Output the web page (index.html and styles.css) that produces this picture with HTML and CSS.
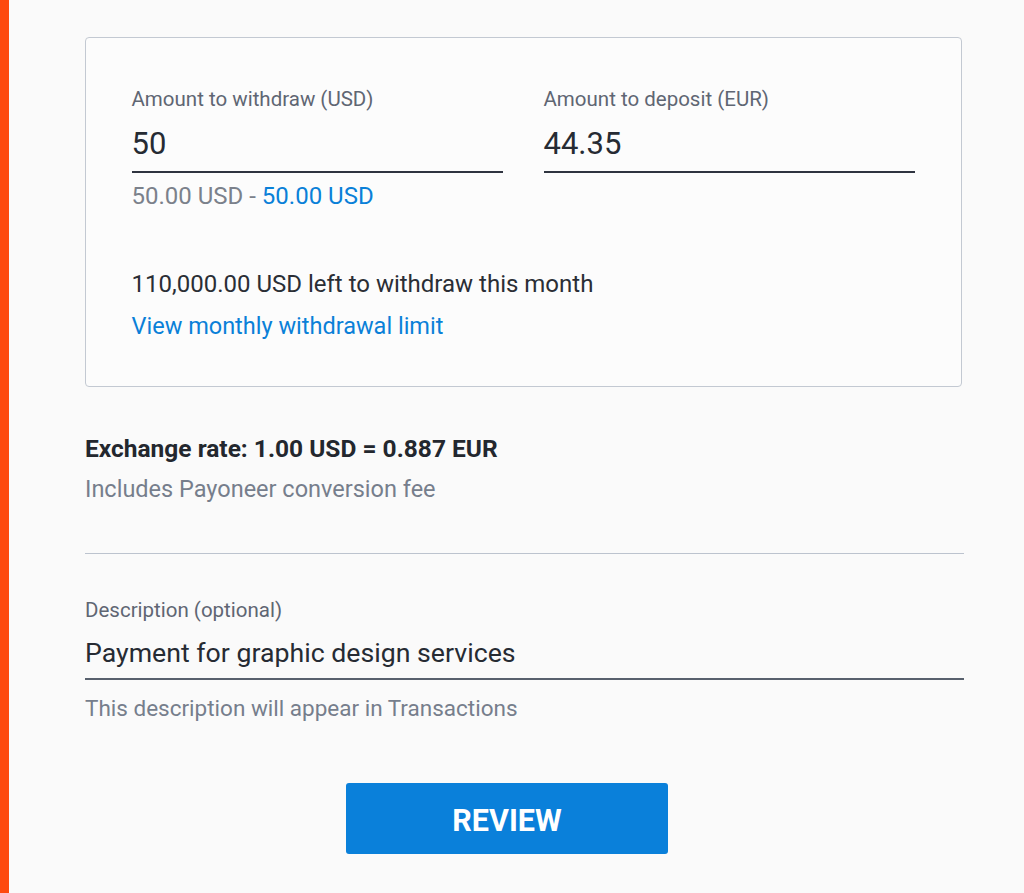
FILE: index.html
```html
<!DOCTYPE html>
<html lang="en">
<head>
  <meta charset="UTF-8" />
  <title>Withdraw funds</title>
  <link rel="stylesheet" href="styles.css">
</head>
<body>
  <div class="edge"></div>

  <main class="page">
    <section class="amounts">
      <div class="fields">
        <div class="field">
          <label class="field-label">Amount to withdraw (USD)</label>
          <div class="field-value">50</div>
          <div class="range">50.00 USD - <span class="link">50.00 USD</span></div>
        </div>
        <div class="field">
          <label class="field-label">Amount to deposit (EUR)</label>
          <div class="field-value">44.35</div>
        </div>
      </div>

      <p class="left">110,000.00 USD left to withdraw this month</p>
      <a class="link limit" href="#">View monthly withdrawal limit</a>
    </section>

    <div class="rate">
      <div class="rate-title">Exchange rate: 1.00 USD = 0.887 EUR</div>
      <div class="muted">Includes Payoneer conversion fee</div>
    </div>

    <div class="desc">
      <label class="field-label">Description (optional)</label>
      <div class="desc-value">Payment for graphic design services</div>
      <div class="muted helper">This description will appear in Transactions</div>
    </div>

    <div class="actions">
      <button class="review">REVIEW</button>
    </div>
  </main>
</body>
</html>
```

FILE: styles.css
```css
body {
  margin: 0;
  background: #fafafa;
  font-family: Roboto, "Liberation Sans", sans-serif;
  color: #2b2f37;
  display: flex;
  min-height: 893px;
}

.edge {
  width: 9px;
  background: #fe4a0e;
  flex-shrink: 0;
}

.page {
  margin-left: 76px;
  width: 879px;
  padding-top: 37px;
}

/* amounts card */
.amounts {
  width: 877px;
  height: 350px;
  box-sizing: border-box;
  border: 1.5px solid #c3c9d2;
  border-radius: 4px;
  background: #fcfcfc;
  padding: 47px 46px 0 45.5px;
}

.fields {
  display: flex;
  gap: 40.5px;
}

.field {
  width: 372px;
}

.field-label {
  display: block;
  font-size: 20.5px;
  line-height: 28px;
  color: #5f6673;
}

.field-value {
  font-size: 31px;
  line-height: 36px;
  margin-top: 13px;
  padding-bottom: 8.5px;
  border-bottom: 2px solid #2f3440;
  color: #262b33;
}

.range {
  font-size: 24px;
  line-height: 30px;
  margin-top: 8px;
  color: #7b818b;
}

.link {
  color: #0a80d8;
  text-decoration: none;
}

.left {
  margin: 58px 0 0;
  font-size: 24px;
  line-height: 30px;
  color: #2a2e35;
}

.limit {
  display: block;
  font-size: 23.5px;
  line-height: 30px;
  margin-top: 12px;
}

/* exchange rate */
.rate {
  margin-top: 47px;
  padding-bottom: 48.5px;
  border-bottom: 1.5px solid #bcc3ce;
}

.rate-title {
  font-size: 24.5px;
  font-weight: 700;
  line-height: 30px;
  color: #23272e;
}

.muted {
  font-size: 23.5px;
  line-height: 30px;
  margin-top: 10px;
  color: #767e8c;
}

/* description */
.desc {
  margin-top: 42.5px;
}

.desc-value {
  font-size: 26.7px;
  line-height: 34px;
  margin-top: 11.5px;
  padding-bottom: 8.5px;
  border-bottom: 2px solid #58606d;
  color: #262b33;
}

.helper {
  font-size: 22.5px;
  margin-top: 12.5px;
}

.actions {
  display: flex;
  justify-content: center;
  margin-top: 60.5px;
  padding-right: 35px;
}

.review {
  width: 322px;
  height: 71px;
  padding-top: 4px;
  border: none;
  border-radius: 3px;
  background: #0a80da;
  color: #fff;
  font-family: Roboto, "Liberation Sans", sans-serif;
  font-size: 30.5px;
  font-weight: 700;
}
```
